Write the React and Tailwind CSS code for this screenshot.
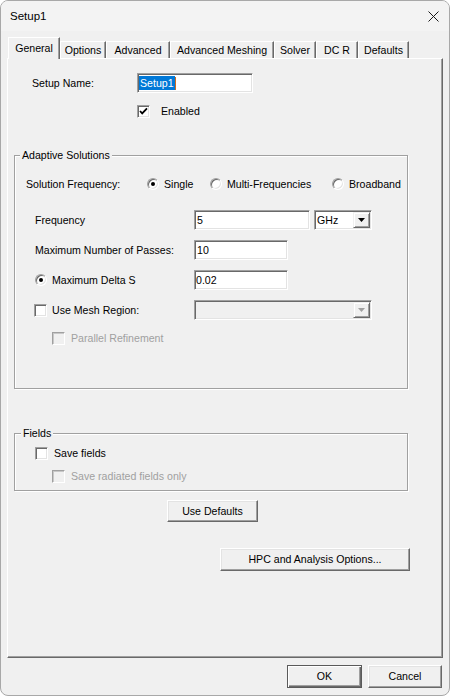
import React from 'react';

const Check = ({ checked, disabled }) => (
  <div
    className={
      disabled
        ? 'w-[13px] h-[13px] shrink-0 flex items-center justify-center bg-[#f0f0f0] border border-t-[#a0a0a0] border-l-[#a0a0a0] border-b-white border-r-white shadow-[inset_1px_1px_0_#c8c8c8]'
        : 'w-[13px] h-[13px] shrink-0 flex items-center justify-center bg-white border border-t-[#a0a0a0] border-l-[#a0a0a0] border-b-white border-r-white shadow-[inset_1px_1px_0_#696969,inset_-1px_-1px_0_#e3e3e3]'
    }
  >
    {checked && (
      <svg width="11" height="11" viewBox="0 0 11 11">
        <path d="M2 5 L4.2 7.4 L9 2.4" fill="none" stroke="#000" strokeWidth="1.8" />
      </svg>
    )}
  </div>
);

const Radio = ({ checked }) => (
  <div className="w-[12px] h-[12px] shrink-0 rounded-full bg-white border border-t-[#a0a0a0] border-l-[#a0a0a0] border-b-white border-r-white shadow-[inset_1px_1px_0_#696969,inset_-1px_-1px_0_#e3e3e3] flex items-center justify-center">
    {checked && <div className="w-[4px] h-[4px] rounded-full bg-black" />}
  </div>
);

const Arrow = ({ disabled }) => (
  <div className="w-[17px] h-full shrink-0 flex items-center justify-center bg-[#f0f0f0] border border-t-[#f0f0f0] border-l-[#f0f0f0] border-b-[#696969] border-r-[#696969] shadow-[inset_1px_1px_0_#fff,inset_-1px_-1px_0_#a0a0a0]">
    <svg width="7" height="4" viewBox="0 0 7 4">
      <path d="M0 0 L7 0 L3.5 4 Z" fill={disabled ? '#a0a0a0' : '#000'} />
    </svg>
  </div>
);

const sunken =
  'border border-t-[#a0a0a0] border-l-[#a0a0a0] border-b-white border-r-white shadow-[inset_1px_1px_0_#696969,inset_-1px_-1px_0_#e3e3e3]';

const Tab = ({ label, w, selected }) => (
  <div
    style={{ width: w }}
    className={
      selected
        ? 'h-[22px] -mb-px flex items-center justify-center bg-[#f0f0f0] border-t border-l border-r border-t-white border-l-white border-r-[#696969] shadow-[inset_-1px_0_0_#a0a0a0] relative z-10'
        : 'h-[17px] flex items-center justify-center bg-[#f0f0f0] border-t border-l border-r border-t-white border-l-white border-r-[#696969] shadow-[inset_-1px_0_0_#a0a0a0]'
    }
  >
    {label}
  </div>
);

export default function App() {
  return (
    <div className="w-[450px] h-[696px] bg-[#f0f0f0] border border-[#a8a8a8] rounded-[8px] overflow-hidden flex flex-col text-black text-[10.6px] leading-[13px] font-['Liberation_Sans',Arial,sans-serif]">
      {/* Title bar */}
      <div className="h-[30px] shrink-0 flex items-center justify-between pl-[9px] pr-[10px] bg-[#f3f3f3] pt-[1px]">
        <span className="text-[11.5px] font-['Liberation_Sans',Arial,sans-serif]">Setup1</span>
        <svg width="11" height="11" viewBox="0 0 11 11">
          <path d="M0.5 0.5 L10.5 10.5 M10.5 0.5 L0.5 10.5" stroke="#1a1a1a" strokeWidth="1" />
        </svg>
      </div>

      {/* Tabs */}
      <div className="h-[27px] shrink-0 flex items-end pl-[7px]">
        <Tab label="General" w={52} selected />
        <Tab label="Options" w={46} />
        <Tab label="Advanced" w={64} />
        <Tab label="Advanced Meshing" w={104} />
        <Tab label="Solver" w={42} />
        <Tab label="DC R" w={42} />
        <Tab label="Defaults" w={51} />
      </div>

      {/* Tab page */}
      <div className="ml-[6px] w-[436px] h-[600px] shrink-0 flex flex-col border border-t-white border-l-white border-r-[#696969] border-b-[#696969] shadow-[inset_-1px_-1px_0_#a0a0a0]">
        {/* Setup Name */}
        <div className="mt-[14px] ml-[24px] h-[20px] flex items-center">
          <span className="w-[105px]">Setup Name:</span>
          <div className={`w-[116px] h-[20px] bg-white flex items-center pl-[1px] ${sunken}`}>
            <span className="bg-[#0078d7] text-white h-[14px] flex items-center px-[1px]">Setup1</span>
            <div className="w-[1px] h-[13px] bg-[#d06a1f]" />
          </div>
        </div>

        {/* Enabled */}
        <div className="mt-[12px] ml-[129px] h-[13px] flex items-center gap-[11px]">
          <Check checked />
          <span>Enabled</span>
        </div>

        {/* Adaptive Solutions group */}
        <div className="mt-[37px] ml-[6px] w-[394px] h-[234px] shrink-0 flex flex-col border border-[#a0a0a0] shadow-[inset_1px_1px_0_#fff,1px_1px_0_#fff]">
          <span className="-mt-[7px] ml-[5px] px-[2px] w-fit bg-[#f0f0f0] leading-[13px]">Adaptive Solutions</span>

          <div className="mt-[15px] ml-[11px] h-[14px] flex items-center">
            <span className="w-[121px]">Solution Frequency:</span>
            <div className="w-[63px] flex items-center gap-[5px]">
              <Radio checked />
              <span>Single</span>
            </div>
            <div className="w-[122px] flex items-center gap-[5px]">
              <Radio />
              <span>Multi-Frequencies</span>
            </div>
            <div className="flex items-center gap-[5px]">
              <Radio />
              <span>Broadband</span>
            </div>
          </div>

          <div className="mt-[19px] ml-[20px] h-[20px] flex items-center">
            <span className="w-[159px]">Frequency</span>
            <div className={`w-[116px] h-[20px] bg-white flex items-center pl-[2px] ${sunken}`}>5</div>
            <div className={`ml-[4px] w-[58px] h-[20px] bg-white flex items-center p-[1px] ${sunken}`}>
              <span className="flex-1 pl-[1px]">GHz</span>
              <Arrow />
            </div>
          </div>

          <div className="mt-[10px] ml-[20px] h-[20px] flex items-center">
            <span className="w-[159px]">Maximum Number of Passes:</span>
            <div className={`w-[94px] h-[20px] bg-white flex items-center pl-[2px] ${sunken}`}>10</div>
          </div>

          <div className="mt-[10px] ml-[20px] h-[20px] flex items-center">
            <div className="w-[159px] flex items-center gap-[5px]">
              <Radio checked />
              <span>Maximum Delta S</span>
            </div>
            <div className={`w-[94px] h-[20px] bg-white flex items-center pl-[1px] ${sunken}`}>0.02</div>
          </div>

          <div className="mt-[10px] ml-[19px] h-[20px] flex items-center">
            <div className="w-[160px] flex items-center gap-[5px]">
              <Check />
              <span>Use Mesh Region:</span>
            </div>
            <div className={`w-[178px] h-[20px] bg-[#f0f0f0] flex items-center justify-end p-[1px] ${sunken}`}>
              <Arrow disabled />
            </div>
          </div>

          <div className="mt-[12px] ml-[37px] h-[13px] flex items-center gap-[6px]">
            <Check disabled />
            <span className="text-[#a0a0a0]">Parallel Refinement</span>
          </div>
        </div>

        {/* Fields group */}
        <div className="mt-[44px] ml-[6px] w-[394px] h-[58px] shrink-0 flex flex-col border border-[#a0a0a0] shadow-[inset_1px_1px_0_#fff,1px_1px_0_#fff]">
          <span className="-mt-[7px] ml-[6px] px-[2px] w-fit bg-[#f0f0f0] leading-[13px]">Fields</span>
          <div className="mt-[7px] ml-[20px] h-[13px] flex items-center gap-[6px]">
            <Check />
            <span>Save fields</span>
          </div>
          <div className="mt-[10px] ml-[37px] h-[13px] flex items-center gap-[6px]">
            <Check disabled />
            <span className="text-[#a0a0a0]">Save radiated fields only</span>
          </div>
        </div>

        {/* Use Defaults */}
        <div className="mt-[9px] ml-[159px] w-[91px] h-[22px] flex items-center justify-center bg-[#f0f0f0] border border-t-white border-l-white border-b-[#696969] border-r-[#696969] shadow-[inset_-1px_-1px_0_#a0a0a0,inset_1px_1px_0_#e3e3e3]">
          Use Defaults
        </div>

        {/* HPC */}
        <div className="mt-[26px] ml-[212px] w-[190px] h-[23px] flex items-center justify-center bg-[#f0f0f0] border border-t-white border-l-white border-b-[#696969] border-r-[#696969] shadow-[inset_-1px_-1px_0_#a0a0a0,inset_1px_1px_0_#e3e3e3]">
          HPC and Analysis Options...
        </div>
      </div>

      {/* Bottom buttons */}
      <div className="mt-[7px] flex justify-end gap-[6px] pr-[7px]">
        <div className="w-[75px] h-[23px] flex items-center justify-center bg-[#f0f0f0] border border-[#5a5a5a] shadow-[inset_1px_1px_0_#fff,inset_-1px_-1px_0_#696969,inset_-2px_-2px_0_#a0a0a0]">
          OK
        </div>
        <div className="w-[74px] h-[23px] flex items-center justify-center bg-[#f0f0f0] border border-t-white border-l-white border-b-[#696969] border-r-[#696969] shadow-[inset_-1px_-1px_0_#a0a0a0,inset_1px_1px_0_#e3e3e3]">
          Cancel
        </div>
      </div>
    </div>
  );
}
